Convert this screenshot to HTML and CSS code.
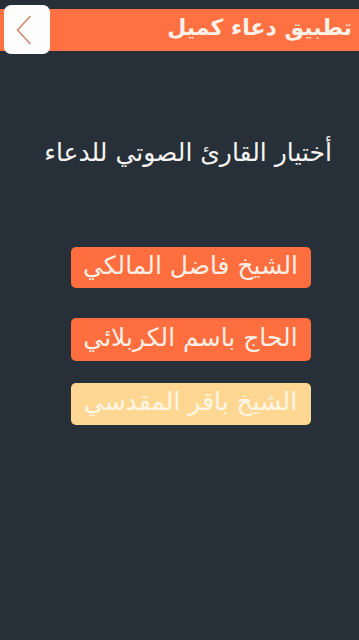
FILE: index.html
```html
<!DOCTYPE html>
<html lang="ar" dir="rtl">
<head>
<meta charset="utf-8">
<link rel="stylesheet" href="styles.css">
</head>
<body>
<header class="topbar">
  <div class="bar">
    <span class="title">تطبيق دعاء كميل</span>
  </div>
  <button class="back" aria-label="back">
    <svg width="18" height="30" viewBox="0 0 18 30"><path d="M15 1.5 L2.5 15 L15 28.5" fill="none" stroke="#cf8a6e" stroke-width="1.6" stroke-linecap="round" stroke-linejoin="round"/></svg>
  </button>
</header>
<main class="content">
  <h1 class="heading">أختيار القارئ الصوتي للدعاء</h1>
  <div class="list">
    <div class="reader reader-first">الشيخ فاضل المالكي</div>
    <div class="reader reader-second">الحاج باسم الكربلائي</div>
    <div class="reader reader-pale">الشيخ باقر المقدسي</div>
  </div>
</main>
</body>
</html>
```

FILE: styles.css
```css
html, body {
  margin: 0;
  padding: 0;
  background: #272f38;
  height: 100%;
}
body {
  font-family: "DejaVu Sans", "Noto Sans", sans-serif;
  color: #fbf3ee;
}
.topbar {
  position: relative;
  padding-top: 9px;
}
.bar {
  height: 42px;
  background: #ff7143;
  display: flex;
  align-items: center;
  justify-content: flex-start;
  padding-right: 7px;
}
.title {
  font-size: 22px;
  font-weight: bold;
  color: #fdf1e8;
  line-height: 1;
  margin-top: -4px;
}
.back {
  position: absolute;
  left: 4px;
  top: 5px;
  width: 46px;
  height: 49px;
  border: none;
  border-radius: 7px;
  background: #fdfdfd;
  display: flex;
  align-items: center;
  justify-content: center;
  padding: 0;
}
.back svg {
  margin-left: -6px;
}
.content {
  display: flex;
  flex-direction: column;
  align-items: center;
}
.heading {
  margin: 82px 0 0 17px;
  font-size: 25px;
  font-weight: normal;
  line-height: 40px;
  color: #f6f4f2;
}
.list {
  display: flex;
  flex-direction: column;
  margin-left: 22px;
  margin-top: 74px;
}
.reader {
  width: 240px;
  height: 41px;
  border-radius: 5px;
  background: #ff6e3e;
  color: #fbefe6;
  font-size: 25px;
  display: flex;
  align-items: center;
  justify-content: center;
  box-sizing: border-box;
  padding-bottom: 5px;
}
.reader-second {
  margin-top: 30px;
  height: 43px;
}
.reader-pale {
  margin-top: 22px;
  height: 42px;
  background: #fed893;
  color: #fff6e6;
}
```
